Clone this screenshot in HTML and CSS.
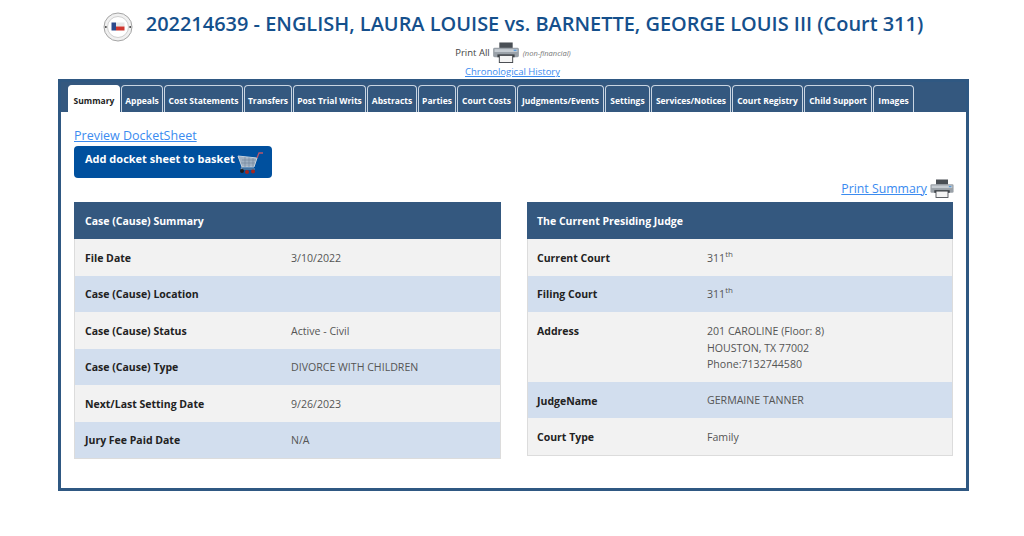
FILE: index.html
```html
<!DOCTYPE html>
<html lang="en">
<head>
<meta charset="utf-8">
<title>Case 202214639</title>
<link rel="stylesheet" href="styles.css">
</head>
<body>
<svg width="0" height="0" class="defs">
  <defs>
    <symbol id="printer" viewBox="0 0 28 22">
      <rect x="7" y="0.5" width="14" height="6" fill="#4a4f55"/>
      <rect x="0.5" y="6" width="27" height="10" rx="1.5" fill="#9aa1a8"/>
      <rect x="2" y="7.5" width="24" height="3" fill="#c6ccd2"/>
      <rect x="22" y="8" width="3" height="1.5" fill="#5a9bd8"/>
      <rect x="5" y="13" width="18" height="3" fill="#3e4348"/>
      <rect x="7" y="14" width="14" height="7.5" fill="#f4f4f4" stroke="#44484d"/>
    </symbol>
  </defs>
</svg>
<header class="top">
  <h1 class="title">
    <svg class="seal" viewBox="0 0 30 30" width="30" height="30" aria-hidden="true">
      <circle cx="15" cy="15" r="14" fill="#f0f0f0" stroke="#a5a5a5" stroke-width="1"/>
      <circle cx="15" cy="15" r="10.500" fill="#fff" stroke="#cfcfcf" stroke-width="1"/>
      <rect x="8.500" y="10.500" width="4.500" height="8" fill="#2c4a8c"/>
      <rect x="13" y="10.500" width="8.500" height="4" fill="#e8e8e8"/>
      <rect x="13" y="14.500" width="8.500" height="4" fill="#d0362f"/>
      <circle cx="2.800" cy="15" r="1" fill="#444"/>
      <circle cx="27.200" cy="15" r="1" fill="#444"/>
    </svg>
    <span>202214639 - ENGLISH, LAURA LOUISE vs. BARNETTE, GEORGE LOUIS III (Court 311)</span>
  </h1>
  <div class="print-all">
    <span>Print All</span>
    <svg class="printer-lg"><use href="#printer"/></svg>
    <em class="note">(non-financial)</em>
  </div>
  <a class="link chrono" href="#">Chronological History</a>
</header>

<main class="panel">
  <nav class="tabs">
    <a class="tab active" href="#">Summary</a>
    <a class="tab" href="#">Appeals</a>
    <a class="tab" href="#">Cost Statements</a>
    <a class="tab" href="#">Transfers</a>
    <a class="tab" href="#">Post Trial Writs</a>
    <a class="tab" href="#">Abstracts</a>
    <a class="tab" href="#">Parties</a>
    <a class="tab" href="#">Court Costs</a>
    <a class="tab" href="#">Judgments/Events</a>
    <a class="tab" href="#">Settings</a>
    <a class="tab" href="#">Services/Notices</a>
    <a class="tab" href="#">Court Registry</a>
    <a class="tab" href="#">Child Support</a>
    <a class="tab" href="#">Images</a>
  </nav>
  <section class="content">
    <a class="link preview" href="#">Preview DocketSheet</a>
    <button class="basket" type="button">
      <span class="basket-text">Add docket sheet to basket</span>
      <svg class="cart" viewBox="0 0 26 24" width="26" height="24" aria-hidden="true">
        <path d="M1 6 L20 8 L17 17 L5 17 Z" fill="#9fb0c2" stroke="#c6d1dc" stroke-width="1"/>
        <path d="M5 10H19M4 13H18M8 7V17M12 7.500V17M16 8V17" stroke="#6f8398" stroke-width=".6" fill="none"/>
        <path d="M20 8 L22 3 H26" stroke="#b9566a" stroke-width="1.300" fill="none"/>
        <path d="M5 17 L4 19 H18" stroke="#8b98a6" stroke-width="1" fill="none"/>
        <circle cx="5" cy="21" r="2" fill="#1c1c1c"/>
        <circle cx="10" cy="22" r="2" fill="#a3261e"/>
        <circle cx="16" cy="21.500" r="2" fill="#a3261e"/>
      </svg>
    </button>
    <div class="print-summary">
      <a class="link" href="#">Print Summary</a>
      <svg class="printer-sm"><use href="#printer"/></svg>
    </div>
    <div class="columns">
      <div class="card">
        <div class="card-head wide">Case (Cause) Summary</div>
        <div class="row left"><span class="label">File Date</span><span class="value">3/10/2022</span></div>
        <div class="row left alt"><span class="label">Case (Cause) Location</span><span class="value"></span></div>
        <div class="row left"><span class="label">Case (Cause) Status</span><span class="value">Active - Civil</span></div>
        <div class="row left alt"><span class="label">Case (Cause) Type</span><span class="value">DIVORCE WITH CHILDREN</span></div>
        <div class="row left"><span class="label">Next/Last Setting Date</span><span class="value">9/26/2023</span></div>
        <div class="row left alt"><span class="label">Jury Fee Paid Date</span><span class="value">N/A</span></div>
      </div>
      <div class="card">
        <div class="card-head">The Current Presiding Judge</div>
        <div class="row right"><span class="label">Current Court</span><span class="value">311<sup>th</sup></span></div>
        <div class="row right alt"><span class="label">Filing Court</span><span class="value">311<sup>th</sup></span></div>
        <div class="row right tall"><span class="label">Address</span><span class="value">201 CAROLINE (Floor: 8)<br>HOUSTON, TX 77002<br>Phone:7132744580</span></div>
        <div class="row right alt short"><span class="label">JudgeName</span><span class="value">GERMAINE TANNER</span></div>
        <div class="row right last"><span class="label">Court Type</span><span class="value">Family</span></div>
      </div>
    </div>
  </section>
</main>
</body>
</html>
```

FILE: styles.css
```css
* { box-sizing: border-box; }
html, body { margin: 0; padding: 0; }
body {
  background: #fff;
  font-family: "Open Sans", "Noto Sans", sans-serif;
  color: #333;
  height: 536px;
  overflow: hidden;
}
.defs { position: absolute; }
.top {
  display: flex;
  flex-direction: column;
  align-items: center;
  padding-top: 8px;
  height: 79px;
}
.title {
  margin: 0;
  padding-left: 2px;
  display: flex;
  align-items: center;
  gap: 13px;
  height: 30px;
  font-size: 19.950px;
  font-weight: 600;
  color: #15508c;
  white-space: nowrap;
}
.seal { flex: none; margin-top: 8px; }
.print-all {
  display: flex;
  align-items: center;
  gap: 2px;
  height: 23px;
  margin-top: 3px;
  margin-left: 2px;
  font-size: 9.5px;
  color: #444;
}
.printer-lg { width: 28px; height: 21px; }
.printer-sm { width: 24px; height: 19px; }
.note { font-size: 7.5px; color: #777; margin-left: 1px; }
.link { color: #3b8bf0; text-decoration: underline; }
.chrono { font-size: 9.5px; margin-top: 1px; margin-left: 1px; }
.panel {
  width: 911px;
  height: 412px;
  margin-left: 58px;
  border: 3px solid #2f5882;
  background: #fff;
}
.tabs {
  display: grid;
  grid-template-columns: 52px 42px 79px 48px 73px 50px 38px 59px 87px 45px 80px 71px 68px 41px;
  justify-content: start;
  gap: 1px;
  height: 30px;
  padding: 3px 0 0 7px;
  background: #34587f;
}
.tab {
  display: flex;
  align-items: center;
  justify-content: center;
  height: 27px;
  padding: 3px 0 0;
  font-size: 8.5px;
  font-weight: 700;
  color: #fff;
  text-decoration: none;
  white-space: nowrap;
  background: #34587f;
  border: 1px solid #c9d5e2;
  border-bottom: 0;
  border-radius: 4px 4px 0 0;
}
.tab.active { background: #fff; color: #222; border-color: #fff; }
.content {
  padding: 15px 13px 0 13px;
  display: flex;
  flex-direction: column;
  align-items: flex-start;
}
.preview { font-size: 12.5px; line-height: 17px; }
.basket {
  display: flex;
  align-items: center;
  gap: 2px;
  width: 198px;
  height: 32px;
  padding: 0 0 0 11px;
  margin-top: 2px;
  background: #00509e;
  color: #fff;
  border: 0;
  border-radius: 4px;
  font: 700 11px "Open Sans", sans-serif;
  white-space: nowrap;
}
.basket-text { padding-bottom: 8px; }
.print-summary {
  align-self: flex-end;
  display: flex;
  align-items: center;
  gap: 3px;
  font-size: 12.3px;
  height: 20px;
  margin-right: -1px;
}
.columns {
  display: grid;
  grid-template-columns: 427px 426px;
  gap: 26px;
  align-items: start;
  width: 879px;
  margin-top: 4px;
}
.card { border: 1px solid #dcdcdc; border-top: 0; }
.card-head {
  display: flex;
  align-items: center;
  height: 37px;
  padding-left: 10px;
  margin: 0 -1px;
  background: #34587f;
  color: #fff;
  font-size: 10.5px;
  font-weight: 700;
}
.card-head.wide { padding-left: 11px; }
.row {
  display: grid;
  align-items: center;
  height: 36.5px;
  padding-top: 1px;
  background: #f2f2f2;
  font-size: 10.5px;
}
.row.left { grid-template-columns: 206px 1fr; padding-left: 10px; }
.row.right { grid-template-columns: 170px 1fr; padding-left: 9px; }
.row.alt { background: #d2deee; }
.row.tall { height: 70px; align-items: start; padding-top: 11px; }
.row.tall .label { padding-top: 1px; }
.row.short { height: 36px; }
.row.last { height: 37px; }
.label { font-weight: 700; color: #222; }
.value { color: #555; font-size: 10.6px; line-height: 16.500px; }
.value sup { font-size: 8px; line-height: 0; }
```
